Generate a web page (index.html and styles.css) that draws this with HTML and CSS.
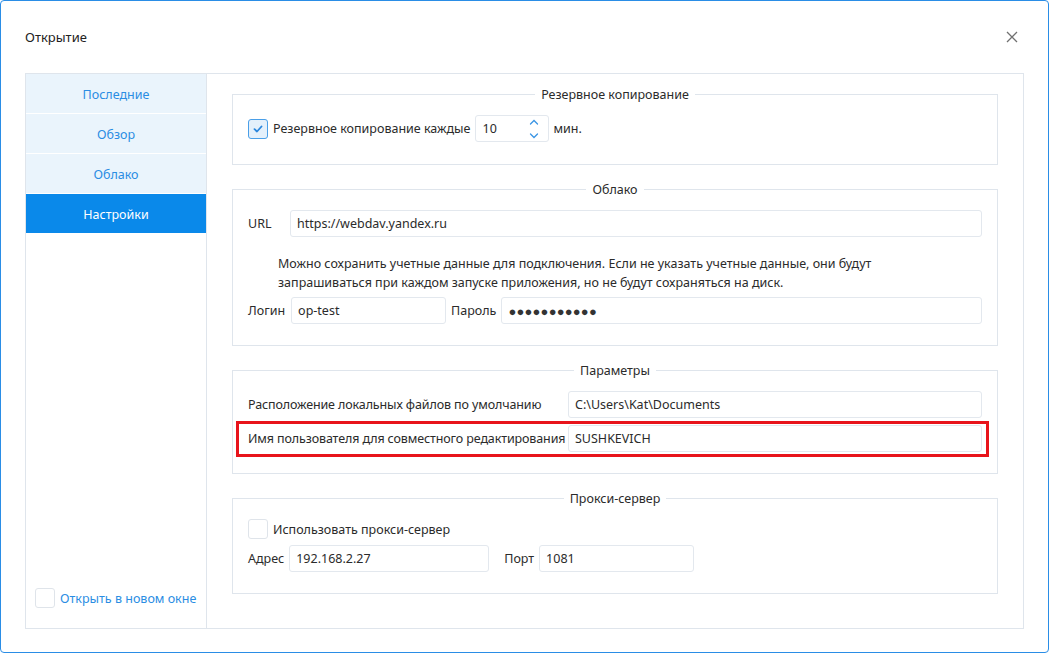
FILE: index.html
```html
<!DOCTYPE html>
<html lang="ru">
<head>
<meta charset="utf-8">
<link rel="stylesheet" href="styles.css">
</head>
<body>
<div class="window">
  <header class="header">
    <span class="title">Открытие</span>
    <svg class="close" width="12" height="12" viewBox="0 0 12 12"><path d="M1 1L11 11M11 1L1 11" stroke="#707070" stroke-width="1.3" fill="none"/></svg>
  </header>
  <div class="panel">
    <aside class="sidebar">
      <nav class="nav">
        <div class="nav-item">Последние</div>
        <div class="nav-item">Обзор</div>
        <div class="nav-item">Облако</div>
        <div class="nav-item active">Настройки</div>
      </nav>
      <label class="new-window"><span class="check"></span><span>Открыть в новом окне</span></label>
    </aside>
    <main class="content">
      <fieldset class="group first">
        <legend>Резервное копирование</legend>
        <div class="row">
          <span class="check checked"><svg width="10" height="8" viewBox="0 0 10 8"><path d="M1.5 4.2L4 6.5L8.5 1.5" stroke="#2a86dd" stroke-width="1.8" fill="none" stroke-linecap="round" stroke-linejoin="round"/></svg></span>
          <span class="text">Резервное копирование каждые</span>
          <span class="input num">10<span class="spin"><svg width="10" height="22" viewBox="0 0 10 22"><path d="M1.5 6L5 2.5L8.5 6M1.5 16L5 19.5L8.5 16" stroke="#3a95e4" stroke-width="1.3" fill="none" stroke-linecap="round"/></svg></span></span>
          <span class="text">мин.</span>
        </div>
      </fieldset>
      <fieldset class="group">
        <legend>Облако</legend>
        <div class="row">
          <span class="lbl url-lbl">URL</span>
          <span class="input grow">https://webdav.yandex.ru</span>
        </div>
        <p class="note">Можно сохранить учетные данные для подключения. Если не указать учетные данные, они будут<br>запрашиваться при каждом запуске приложения, но не будут сохраняться на диск.</p>
        <div class="row">
          <span class="lbl">Логин</span>
          <span class="input login">op-test</span>
          <span class="lbl pass-lbl">Пароль</span>
          <span class="input grow dots">●●●●●●●●●●●</span>
        </div>
      </fieldset>
      <fieldset class="group">
        <legend>Параметры</legend>
        <div class="prow">
          <span class="plbl">Расположение локальных файлов по умолчанию</span>
          <span class="input grow">C:\Users\Kat\Documents</span>
        </div>
        <div class="prow highlight">
          <span class="plbl">Имя пользователя для совместного редактирования</span>
          <span class="input grow">SUSHKEVICH</span>
        </div>
      </fieldset>
      <fieldset class="group">
        <legend>Прокси-сервер</legend>
        <div class="row">
          <span class="check"></span>
          <span class="text">Использовать прокси-сервер</span>
        </div>
        <div class="row proxy">
          <span class="lbl">Адрес</span>
          <span class="input addr">192.168.2.27</span>
          <span class="lbl port-lbl">Порт</span>
          <span class="input port">1081</span>
        </div>
      </fieldset>
    </main>
  </div>
</div>
</body>
</html>
```
FILE: styles.css
```css
* { box-sizing: border-box; }
html, body { margin: 0; padding: 0; background: #ffffff; }
body {
  font-family: "Noto Sans", "Open Sans", sans-serif;
  font-size: 12.5px;
  color: #2b2b2b;
}
.window {
  width: 1049px;
  height: 653px;
  border: 1px solid #2a8de6;
  border-radius: 4px;
  background: #fff;
  display: flex;
  flex-direction: column;
}
.header {
  height: 72px;
  display: flex;
  align-items: center;
  justify-content: space-between;
  padding: 0 30px 0 24px;
}
.title { font-size: 13px; color: #222; }
.close { display: block; }
.panel {
  margin: 0 24px;
  height: 556px;
  border: 1px solid #dfe5ec;
  display: flex;
}
.sidebar {
  width: 181px;
  border-right: 1px solid #dfe5ec;
  display: flex;
  flex-direction: column;
  justify-content: space-between;
}
.nav-item {
  height: 40px;
  border-bottom: 1px solid #fff;
  background: #eaf4fc;
  color: #2b8de3;
  display: flex;
  align-items: center;
  justify-content: center;
  padding-top: 1px;
}
.nav-item.active { background: #0a89ea; color: #fff; }
.new-window {
  display: flex;
  align-items: center;
  gap: 5px;
  padding: 0 0 20px 9px;
  color: #2b8de3;
}
.check {
  width: 20px;
  height: 20px;
  border: 1px solid #dfe4ea;
  border-radius: 3px;
  background: #fff;
  display: inline-flex;
  align-items: center;
  justify-content: center;
  flex: none;
}
.check.checked { border-color: #4a9fe8; background: #e4f0fb; }
.content {
  flex: 1;
  padding: 12px 25px 0 25px;
}
.group {
  margin: 0 0 16px 0;
  padding: 12px 15px 21px 15px;
  border: 1px solid #dfe5ec;
  min-width: 0;
}
.group.first { padding-bottom: 22px; }
.group legend {
  margin: 0 auto;
  padding: 0 6px;
  color: #2b2b2b;
}
.row {
  display: flex;
  align-items: center;
}
.text { margin-left: 5px; white-space: nowrap; }
.input {
  height: 27px;
  border: 1px solid #e3e8ee;
  border-radius: 3px;
  background: #fff;
  display: flex;
  align-items: center;
  padding-left: 6px;
  flex: none;
  white-space: nowrap;
}
.grow { flex: 1; }
.num {
  width: 74px;
  margin-left: 4px;
  padding-left: 7px;
}
.spin {
  margin-left: auto;
  margin-right: 9px;
  display: flex;
}
.lbl { flex: none; }
.url-lbl { width: 42px; }
.note { margin: 17px 0 5px 30px; line-height: 19px; }
.login { width: 155px; margin-left: 6px; }
.pass-lbl { margin-left: 5px; margin-right: 5px; }
.dots { font-size: 13px; letter-spacing: 0.2px; color: #333; }
.prow {
  display: grid;
  grid-template-columns: 320px 1fr;
  align-items: center;
}
.plbl { white-space: nowrap; letter-spacing: -0.12px; }
.prow + .prow { margin-top: 7px; }
.prow .input { width: 100%; }
.highlight { position: relative; }
.highlight::after {
  content: "";
  position: absolute;
  top: -4px;
  bottom: -5px;
  left: -12px;
  right: -7px;
  border: 3px solid #e8141b;
  pointer-events: none;
}
.proxy { margin-top: 6px; }
.addr { width: 200px; margin-left: 5px; }
.port-lbl { margin-left: 15px; margin-right: 5px; }
.port { width: 155px; }
```
